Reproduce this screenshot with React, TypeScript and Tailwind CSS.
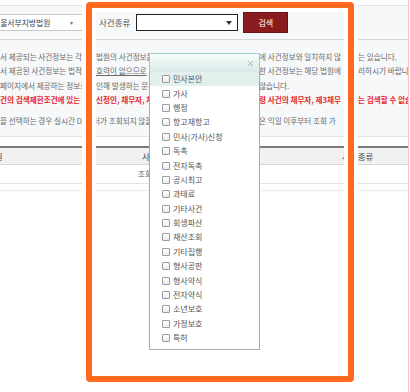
import { X } from 'lucide-react'
import clsx from 'clsx'

const caseTypes = [
  '민사본안', '가사', '행정', '항고재항고', '민사(가사)신청', '독촉', '전자독촉', '공시최고', '과태료',
  '기타사건', '회생파산', '재산조회', '기타집행', '형사공판', '형사약식', '전자약식', '소년보호', '가정보호', '특허',
]

interface NoticeLineProps {
  a?: React.ReactNode
  b?: React.ReactNode
  c?: React.ReactNode
  d?: React.ReactNode
  red?: boolean
  className?: string
}

// one row of the notice text, split in the same columns as the page grid
function NoticeLine({ a, b, c, d, red, className }: NoticeLineProps) {
  return (
    <div
      className={clsx(
        'flex h-[14.4px] leading-[14.4px] whitespace-nowrap',
        red ? 'font-bold text-[#e8262b]' : 'text-[#6a6a6a]',
        className
      )}
    >
      <span className="w-[96px] shrink-0 overflow-hidden">{a}</span>
      <span className="w-[163px] shrink-0 overflow-hidden">{b}</span>
      <span className="w-[99px] shrink-0 overflow-hidden">{c}</span>
      <span className="flex-1 overflow-hidden">{d}</span>
    </div>
  )
}

export default function App() {
  return (
    <div className="relative h-[392px] w-[410px] overflow-hidden bg-white font-['Noto_Sans_CJK_KR','Liberation_Sans',sans-serif]">
      <div className="h-full w-[409px] border-r border-[#f5bfd0] pt-[5px]">
        {/* Search bar */}
        <div className="flex h-[35px] items-center border-y border-t-[#e3e3e3] border-b-[#d6d6d6] bg-[#f7f8fa]">
          <div className="-ml-[9px] flex h-[17px] w-[95px] shrink-0 items-center border border-[#c9c9c9] bg-white pl-[1px] text-[7.8px] text-[#444]">
            <span className="flex-1">서울서부지방법원</span>
            <span className="mr-[12px] text-[6px] text-[#777]">▾</span>
          </div>
          <span className="ml-[13px] text-[8.5px] text-[#555]">사건종류</span>
          <div className="ml-[6px] flex h-[17px] w-[102px] items-center justify-end border border-[#222] bg-white pr-[5px]">
            <svg width="6" height="4" viewBox="0 0 6 4">
              <path d="M0 0h6L3 4z" fill="#333" />
            </svg>
          </div>
          <button className="ml-[5px] h-[21px] w-[45px] border border-[#6e1214] bg-[#8a1b1e] text-[8px] text-white">
            검색
          </button>
        </div>

        {/* Notice */}
        <div className="h-[97px] border-b border-[#dfe3e8] bg-[#f6f8fa] pt-[10px] text-[7.6px]">
          <NoticeLine
            a="서 제공되는 사건정보는 각 "
            b="법원의 사건정보를"
            c="에 사건정보와 일치하지 않"
            d="는 있습니다."
          />
          <NoticeLine
            a="서 제공된 사건정보는 법적인"
            b={<> <span className="underline">효력이 없으므로</span></>}
            c="한 사건정보는 해당 법원에"
            d="리하시기 바랍니다."
          />
          <NoticeLine
            a="페이지에서 제공하는 정보로"
            b="인해 발생하는 문제"
            c="않습니다."
          />
          <NoticeLine
            red
            a="건의 검색제한조건에 있는 "
            b="신청인, 채무자, 채권"
            c="령 사건의 채무자, 제3채무"
            d="는 검색할 수 없습니다."
          />
          <NoticeLine
            className="mt-[6px]"
            a="을 선택하는 경우 실시간 DB"
            b={<span className="-ml-[3px]">터가 조회되지 않을</span>}
            c="은 익일 이후부터 조회 가"
          />
        </div>

        {/* Result table */}
        <div className="mt-[9px] flex h-[19px] items-center border-t-2 border-b border-t-[#7a7a7a] border-b-[#d9d9d9] bg-[#f1f1f1] text-[8.5px] whitespace-nowrap text-[#444]">
          <span className="w-[96px] shrink-0">
            <span className="-ml-[13px]">법원</span>
          </span>
          <span className="w-[163px] shrink-0 pl-[46px]">사건</span>
          <span className="w-[99px] shrink-0 pl-[83px]">사건종류</span>
          <span className="flex-1" />
        </div>
        <div className="flex h-[19px] items-center border-b border-[#e3e3e3] text-[7.6px] whitespace-nowrap text-[#666]">
          <span className="w-[96px] shrink-0" />
          <span className="w-[163px] shrink-0 pl-[42px]">조회</span>
        </div>
        <div className="mt-[6px] border-t border-[#ececec]" />
      </div>

      {/* Orange highlight frame */}
      <div className="pointer-events-none absolute top-[2px] left-[86px] h-[380px] w-[268px] rounded-[4px] border-[6px] border-[#ff6a1e] shadow-[0_0_0_4px_#fff,inset_0_0_0_4px_#fff]" />

      {/* Case type dropdown */}
      <div className="absolute top-[53px] left-[149px] h-[297px] w-[111px] border border-[#a9a9a9] bg-white">
        <div className="-mx-px -mt-px flex h-[19px] items-center justify-end border border-b-0 border-[#9ccdc6] bg-gradient-to-b from-[#f7fbfb] to-[#d7eae7] pr-[4px]">
          <X className="h-[9px] w-[9px] text-[#888]" strokeWidth={1.6} />
        </div>
        <ul>
          {caseTypes.map((name, i) => (
            <li
              key={name}
              className={clsx(
                'flex h-[14.4px] items-center gap-[3px] pl-[12px] text-[8px] whitespace-nowrap',
                i === 0 ? 'bg-[#e1efed] text-[#4a5d78]' : 'text-[#555]'
              )}
            >
              <span className="h-[8px] w-[8px] shrink-0 rounded-[1px] border border-[#9a9a9a] bg-gradient-to-b from-white to-[#ececec]" />
              {name}
            </li>
          ))}
        </ul>
      </div>
    </div>
  )
}
